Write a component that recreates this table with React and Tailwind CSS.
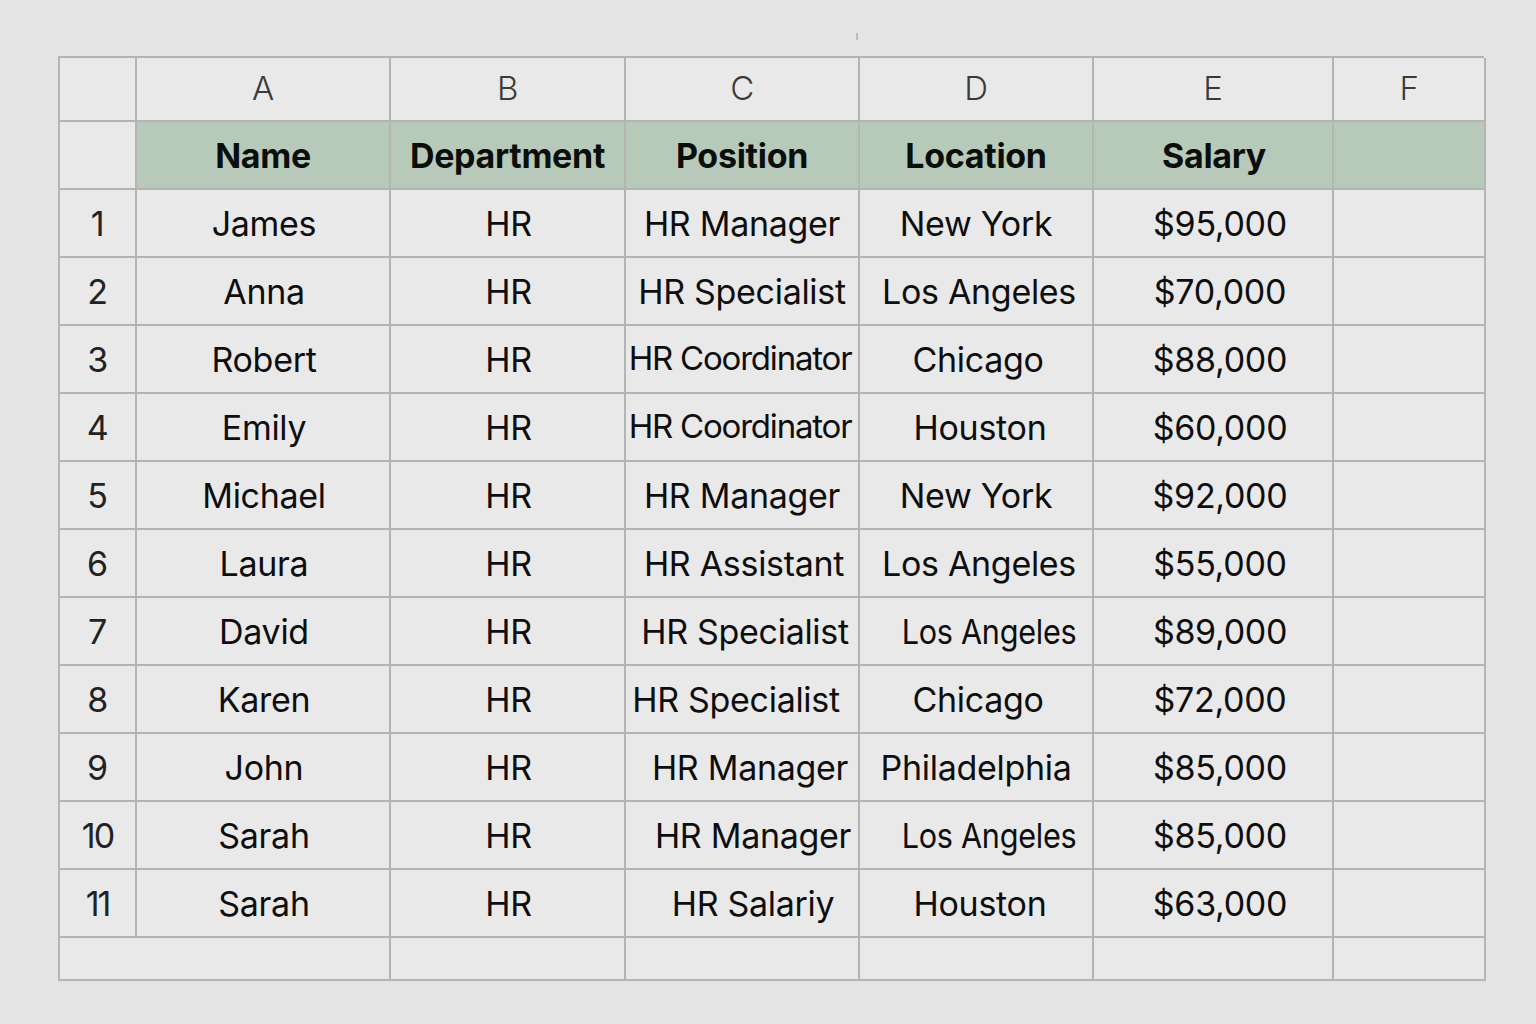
import React from 'react';

const cols = ['A', 'B', 'C', 'D', 'E', 'F'];

const rows = [
  { n: '1', name: 'James', pos: 'HR Manager', posCls: '', loc: 'New York', locCls: '', sal: '$95,000' },
  { n: '2', name: 'Anna', pos: 'HR Specialist', posCls: '', loc: 'Los Angeles', locCls: 'pl-[6px]', sal: '$70,000' },
  { n: '3', name: 'Robert', pos: 'HR Coordinator', posCls: 'pr-[4px]', loc: 'Chicago', locCls: 'pl-[4px]', sal: '$88,000' },
  { n: '4', name: 'Emily', pos: 'HR Coordinator', posCls: 'pr-[4px]', loc: 'Houston', locCls: 'pl-[8px]', sal: '$60,000' },
  { n: '5', name: 'Michael', pos: 'HR Manager', posCls: '', loc: 'New York', locCls: '', sal: '$92,000' },
  { n: '6', name: 'Laura', pos: 'HR Assistant', posCls: 'pl-[4px]', loc: 'Los Angeles', locCls: 'pl-[6px]', sal: '$55,000' },
  { n: '7', name: 'David', pos: 'HR Specialist', posCls: 'pl-[6px]', loc: 'Los Angeles', locCls: 'pl-[26px]', narrow: true, sal: '$89,000' },
  { n: '8', name: 'Karen', pos: 'HR Specialist', posCls: 'pr-[12px]', loc: 'Chicago', locCls: 'pl-[4px]', sal: '$72,000' },
  { n: '9', name: 'John', pos: 'HR Manager', posCls: 'pl-[16px]', loc: 'Philadelphia', locCls: '', sal: '$85,000' },
  { n: '10', name: 'Sarah', pos: 'HR Manager', posCls: 'pl-[22px]', loc: 'Los Angeles', locCls: 'pl-[26px]', narrow: true, sal: '$85,000' },
  { n: '11', name: 'Sarah', pos: 'HR Salariy', posCls: 'pl-[22px]', loc: 'Houston', locCls: 'pl-[8px]', sal: '$63,000' },
];

const cell = 'flex items-center justify-center border-r-2 border-b-2 border-[#b4b4b4] bg-[#e9e9e9] whitespace-nowrap overflow-visible';

export default function App() {
  return (
    <div className="min-h-screen w-full bg-[#e4e4e4] pt-[33px] pl-[58px]" style={{ fontFamily: 'Inter, "Noto Sans", "Liberation Sans", sans-serif' }}>
      {/* little tick above column D */}
      <div className="ml-[798px] w-[2px] h-[7px] bg-[#bdbdbd] mb-[16px]" />

      <div className="grid w-[1426px] grid-cols-[77px_254px_235px_234px_234px_240px_152px] grid-rows-[64px_repeat(12,68px)_43px] border-l-2 border-t-2 border-[#b4b4b4] text-[#0e0e0e] text-[34px] tracking-[-0.3px]">
        {/* column letters */}
        <div className={cell} />
        {cols.map((c) => (
          <div key={c} className={`${cell} text-[#3a3a3a] text-[33px] font-light`}>{c}</div>
        ))}

        {/* header row */}
        <div className={cell} />
        {['Name', 'Department', 'Position', 'Location', 'Salary', ''].map((h, i) => (
          <div key={i} className={`${cell} !bg-[#b7cab9] border-[#9fb2a2] font-bold text-[#0b0f0b] ${i === 4 ? 'pl-[2px]' : ''}`}>{h}</div>
        ))}

        {/* data rows */}
        {rows.map((r, i) => (
          <React.Fragment key={i}>
            <div className={`${cell} text-[#222] ${r.n.length > 1 ? 'tracking-[-2px]' : ''}`}>{r.n}</div>
            <div className={`${cell} pl-[2px]`}>{r.name}</div>
            <div className={`${cell} pl-[2px]`}>HR</div>
            <div className={`${cell} ${r.posCls} ${r.pos === 'HR Coordinator' ? 'tracking-[-1.2px] text-[33px]' : ''}`}>{r.pos}</div>
            <div className={`${cell} ${r.locCls}`}>
              {r.narrow ? <span className="inline-block origin-center scale-x-90">{r.loc}</span> : r.loc}
            </div>
            <div className={`${cell} pl-[14px]`}>{r.sal}</div>
            <div className={cell} />
          </React.Fragment>
        ))}

        {/* trailing empty row */}
        <div className={`${cell} col-span-2`} />
        <div className={cell} />
        <div className={cell} />
        <div className={cell} />
        <div className={cell} />
        <div className={cell} />
      </div>
    </div>
  );
}
